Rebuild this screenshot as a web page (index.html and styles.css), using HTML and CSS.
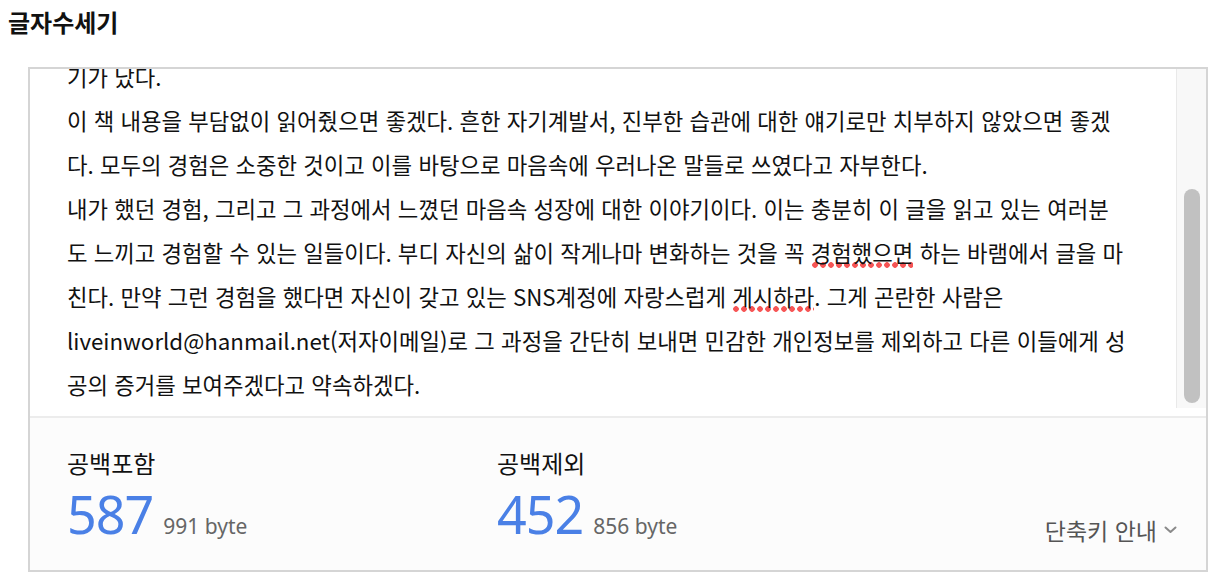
FILE: index.html
```html
<!DOCTYPE html>
<html lang="ko">
<head>
<meta charset="utf-8">
<title>글자수세기</title>
<link rel="stylesheet" href="styles.css">
</head>
<body>
<h1 class="title">글자수세기</h1>
<div class="counter">
  <div class="editor">
    <div class="text-view">
      <div class="text">
        <div class="ln">기가 났다.</div>
        <div class="ln">이 책 내용을 부담없이 읽어줬으면 좋겠다. 흔한 자기계발서, 진부한 습관에 대한 얘기로만 치부하지 않았으면 좋겠</div>
        <div class="ln">다. 모두의 경험은 소중한 것이고 이를 바탕으로 마음속에 우러나온 말들로 쓰였다고 자부한다.</div>
        <div class="ln">내가 했던 경험, 그리고 그 과정에서 느꼈던 마음속 성장에 대한 이야기이다. 이는 충분히 이 글을 읽고 있는 여러분</div>
        <div class="ln">도 느끼고 경험할 수 있는 일들이다. 부디 자신의 삶이 작게나마 변화하는 것을 꼭 <span class="spell">경험했으면</span> 하는 바램에서 글을 마</div>
        <div class="ln">친다. 만약 그런 경험을 했다면 자신이 갖고 있는 SNS계정에 자랑스럽게 <span class="spell">게시하라</span>. 그게 곤란한 사람은</div>
        <div class="ln">liveinworld@hanmail.net(저자이메일)로 그 과정을 간단히 보내면 민감한 개인정보를 제외하고 다른 이들에게 성</div>
        <div class="ln">공의 증거를 보여주겠다고 약속하겠다.</div>
      </div>
    </div>
    <div class="track"><div class="thumb"></div></div>
  </div>
  <div class="footer">
    <div class="stat">
      <div class="label">공백포함</div>
      <div class="value"><span class="num">587</span><span class="bytes">991 byte</span></div>
    </div>
    <div class="stat">
      <div class="label">공백제외</div>
      <div class="value"><span class="num">452</span><span class="bytes">856 byte</span></div>
    </div>
    <div class="shortcut">단축키 안내
      <svg class="chev" width="13" height="8" viewBox="0 0 13 8"><path d="M1.5 1.5 L6.5 6 L11.5 1.5" fill="none" stroke="#8a8a8a" stroke-width="2" stroke-linecap="round" stroke-linejoin="round"/></svg>
    </div>
  </div>
</div>
</body>
</html>
```
FILE: styles.css
```css
html, body {
  margin: 0;
  padding: 0;
  background: #fff;
}
body {
  font-family: "Noto Sans CJK KR", "Noto Sans", sans-serif;
  color: #111;
}
.title {
  margin: 0;
  padding: 8px 8px 0 8px;
  font-size: 24px;
  line-height: 28px;
  font-weight: 700;
  color: #111;
}
.counter {
  box-sizing: border-box;
  width: 1180px;
  margin: 31px 0 0 28px;
  border: 2px solid #d5d5d5;
}
.editor {
  display: flex;
  height: 347px;
  border-bottom: 2px solid #ececec;
  background: #fff;
}
.text-view {
  flex: 1;
  overflow: hidden;
  padding-left: 37px;
}
.text {
  margin-top: -15px;
  font-size: 22.3px;
  line-height: 44px;
  color: #111;
}
.ln {
  white-space: pre;
}
.spell {
  background-image: radial-gradient(circle at 4px 3px, #f65555 2.5px, rgba(246,85,85,0) 3.1px);
  background-size: 8px 6px;
  background-repeat: repeat-x;
  background-position: 0 100%;
}
.track {
  box-sizing: border-box;
  width: 30px;
  height: 339px;
  border-left: 1px solid #e9e9e9;
  background: #f8f8f8;
  padding: 120px 0 0 7px;
}
.thumb {
  width: 16px;
  height: 214px;
  border-radius: 8px;
  background: #c1c1c1;
}
.footer {
  display: flex;
  align-items: flex-end;
  height: 152px;
  background: #fcfcfc;
  padding-left: 37px;
  padding-right: 29px;
  box-sizing: border-box;
  padding-bottom: 26px;
}
.stat {
  width: 430px;
  align-self: stretch;
  padding-top: 30px;
}
.label {
  font-size: 24px;
  line-height: 30px;
  color: #111;
}
.value {
  display: flex;
  align-items: baseline;
  margin-top: 4px;
}
.num {
  font-family: "Noto Sans", sans-serif;
  font-size: 52px;
  line-height: 64px;
  color: #4a80e6;
  letter-spacing: -1px;
}
.bytes {
  font-family: "Noto Sans", sans-serif;
  font-size: 21px;
  color: #666;
  margin-left: 10px;
}
.shortcut {
  margin-left: auto;
  display: flex;
  align-items: center;
  gap: 7px;
  font-size: 23px;
  line-height: 28px;
  color: #555;
}
.chev {
  display: block;
}
```
